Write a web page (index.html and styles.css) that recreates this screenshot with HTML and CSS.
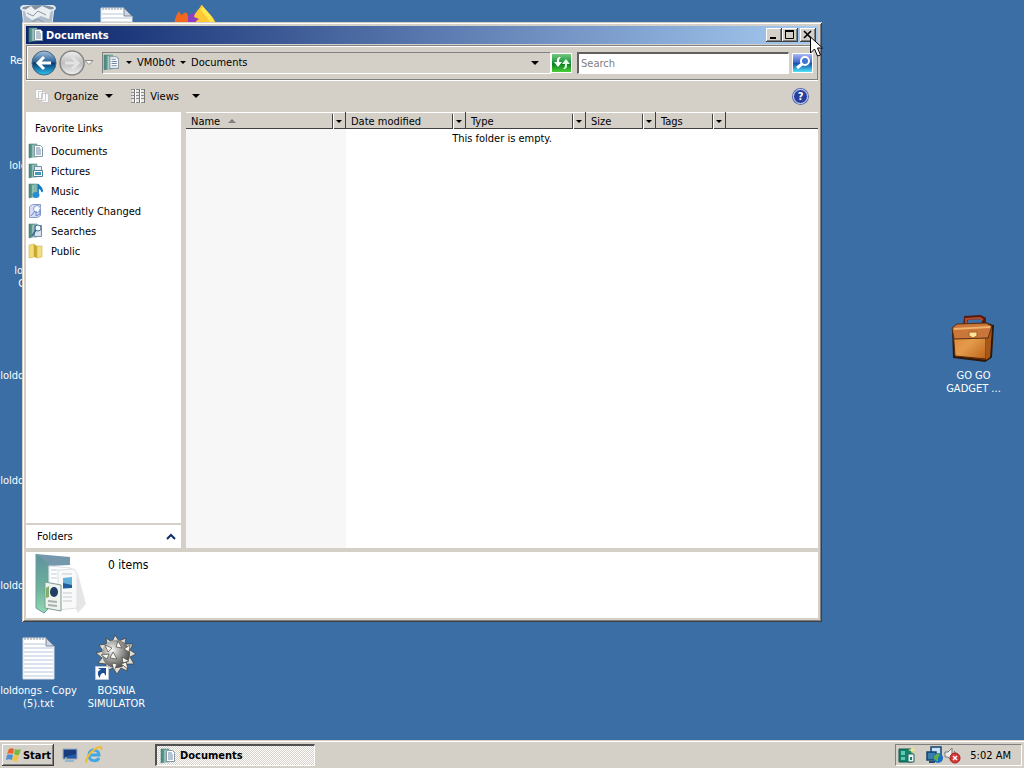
FILE: index.html
```html
<!DOCTYPE html>
<html lang="en">
<head>
    <meta charset="utf-8">
    <title>Documents</title>
    <link rel="stylesheet" href="styles.css">
</head>
<body>
    <!-- shared icons -->
    <svg class="defs" width="0" height="0">
        <defs>
            <linearGradient id="teal" x1="0" x2="1"><stop offset="0" stop-color="#3f8177"/><stop offset="1" stop-color="#9cc9bd"/></linearGradient>
            <linearGradient id="blueBall" x1="0" y1="0" x2="0" y2="1"><stop offset="0" stop-color="#a5c3de"/><stop offset=".45" stop-color="#2c6598"/><stop offset=".5" stop-color="#063a70"/><stop offset="1" stop-color="#2fc5f2"/></linearGradient>
            <linearGradient id="greyBall" x1="0" y1="0" x2="0" y2="1"><stop offset="0" stop-color="#f1f1f0"/><stop offset=".5" stop-color="#bebebe"/><stop offset="1" stop-color="#efefef"/></linearGradient>
            <linearGradient id="leather" x1="0" y1="0" x2="1" y2="1"><stop offset="0" stop-color="#dc8130"/><stop offset=".5" stop-color="#e39b4b"/><stop offset="1" stop-color="#bd6418"/></linearGradient>
            <linearGradient id="bigFolder" x1="0" y1="0" x2="0" y2="1"><stop offset="0" stop-color="#5f909d"/><stop offset=".6" stop-color="#6eb49b"/><stop offset="1" stop-color="#91d9b2"/></linearGradient>
            <radialGradient id="steel" cx=".35" cy=".35" r=".7"><stop offset="0" stop-color="#fafafa"/><stop offset=".45" stop-color="#a5a5a3"/><stop offset="1" stop-color="#4a4a48"/></radialGradient>
        </defs>
        <symbol id="folder" viewBox="0 0 16 16">
            <path d="M1 1h8v13H5L1 15z" fill="url(#teal)" stroke="#4c8a80" stroke-width=".6"/>
            <path d="M5 2v12" stroke="#b7dcd2"/>
        </symbol>
        <symbol id="documents" viewBox="0 0 16 16">
            <use href="#folder"/>
            <path d="M6.500 2.500h6l2 2v9h-8z" fill="#fff" stroke="#8598a8"/>
            <path d="M8 5h4M8 7h5M8 9h5M8 11h5" stroke="#6f88a5"/>
        </symbol>
        <symbol id="page" viewBox="0 0 48 48">
            <path d="M8 3h23l8 8v33H8z" fill="#fff" stroke="#d6dbe3"/>
            <path d="M9 9h21M9 13h29M9 17h29M9 21h29M9 25h29M9 29h29M9 33h29M9 37h29M9 41h29" stroke="#b4c6dc"/>
            <path d="M31 3v8h8z" fill="#ced7e5" stroke="#7c8796"/>
            <path d="M10 2v3M13 2v3M16 2v3M19 2v3M22 2v3M25 2v3M28 2v3" stroke="#8b96a2"/>
        </symbol>
    </svg>

    <main class="desktop">
        <div class="icons">
            <a class="icon" href="#">
                <svg width="48" height="48" viewBox="0 0 48 48"><path d="M7 2l4 43h23l5-43z" fill="#aebccb" stroke="#e7edf2"/><ellipse cx="23" cy="3" rx="17" ry="4" fill="#8292a3" stroke="#e3e8ec" stroke-width="2"/><path d="M10 5l6-4 4 4 7-4 9 4-2 9-8-3-9 4-6-4z" fill="#eceff2"/><path d="M12 8l6 3 5-5 8 4M15 18l8-4 9 5" stroke="#8998aa" fill="none"/></svg>
                <span>Recycle Bin</span>
            </a>
            <a class="icon" href="#">
                <svg width="48" height="48"><use href="#page"/></svg>
                <span>loldongs.txt</span>
            </a>
            <a class="icon" href="#">
                <svg width="48" height="48"><use href="#page"/></svg>
                <span>loldongs -<br>Copy.txt</span>
            </a>
            <a class="icon" href="#">
                <svg width="48" height="48"><use href="#page"/></svg>
                <span>loldongs - Copy<br>(2).txt</span>
            </a>
            <a class="icon" href="#">
                <svg width="48" height="48"><use href="#page"/></svg>
                <span>loldongs - Copy<br>(3).txt</span>
            </a>
            <a class="icon" href="#">
                <svg width="48" height="48"><use href="#page"/></svg>
                <span>loldongs - Copy<br>(4).txt</span>
            </a>
            <a class="icon" href="#">
                <svg width="48" height="48"><use href="#page"/></svg>
                <span>loldongs - Copy<br>(5).txt</span>
            </a>
            <a class="icon" href="#" aria-label="Text file">
                <svg width="48" height="48"><use href="#page"/></svg>
            </a>
            <a class="icon last" href="#">
                <svg width="48" height="48" viewBox="0 0 48 48">
                    <path d="M14 9l-1-6 6 4 3-7 4 6 7-3-1 6 8 0-3 6 6 4-6 3 4 7-7 0 0 7-6-3-4 6-4-6-7 3 0-7-8-1 4-5-6-5 7-2-4-6z" fill="#dddcd6" stroke="#45433c" stroke-width=".8"/>
                    <circle cx="23" cy="19" r="14" fill="url(#steel)"/>
                    <path d="M12 10l7 3-4 4zM25 6l4 7-6-1zM8 20l8-1-2 5zM20 17l4 7-7-1zM31 14l6-4-1 7zM29 22l7 4-6 2zM19 28l5 1-3 7zM28 29l5-2 2 7z" fill="#f6f5ee" stroke="#4a4942" stroke-width=".7"/>
                    <path d="M2.500 31.500h13v13h-13z" fill="#fff" stroke="#b6c4d4"/>
                    <path d="M7 43c-3-3-3-8 1-8l-3-2h8v8l-2-3c-3 0-4 2-4 5z" fill="#1c4e94"/>
                </svg>
                <span>BOSNIA<br>SIMULATOR</span>
            </a>
            <a class="icon" href="#" aria-label="Firefox">
                <svg width="48" height="48" viewBox="0 0 48 48"><path d="M3 24c0-7 1-12 5-18l2 4 5-3 3 5 9 4 4 18-5 11C10 42 3 34 3 24z" fill="#f4671f"/><path d="M17 11c3-2 5-5 9-1l6 4-3 10-12-4z" fill="#8d3fc0"/><path d="M23 12c1-5 5-7 8-13 2 7 15 13 15 25S38 44 28 44l-3-28 3-2z" fill="#ffc936"/><path d="M31 3c3 5 10 8 11 19" stroke="#ffe94f" stroke-width="4" fill="none"/></svg>
            </a>
        </div>

        <a class="icon briefcase" href="#">
            <svg width="48" height="48" viewBox="0 0 48 48">
                <path d="M15 11l1-8 14-1 4 2v7" fill="none" stroke="#551b13" stroke-width="4"/>
                <path d="M16 9V4l14-1 3 2" fill="none" stroke="#b34a2d" stroke-width="2"/>
                <path d="M3 14l32-6 8 3-2 31-6 4-31-4z" fill="#733410" stroke="#2f1808" stroke-width="2"/>
                <path d="M3 14l33-1v31L5 41z" fill="url(#leather)" stroke="#59290c"/>
                <path d="M36 13l6-2-2 31-4 3z" fill="#a75718"/>
                <path d="M2 13l5-4 29-1 6 3-4 12-34 1z" fill="#ca763b" stroke="#572b13"/>
                <path d="M4 14l36-2" stroke="#f0b16b" stroke-width="2"/>
                <path d="M19 17h8v4l-4 2-4-2z" fill="#ffe49c" stroke="#a45c23"/>
            </svg>
            <span>GO GO<br>GADGET ...</span>
        </a>

        <section class="window">
            <header class="titlebar">
                <svg width="16" height="16"><use href="#documents"/></svg>
                <h1>Documents</h1>
                <button aria-label="Minimize"><svg width="12" height="10" viewBox="0 0 12 10"><path d="M2 8h6" stroke="#000" stroke-width="2"/></svg></button>
                <button aria-label="Maximize"><svg width="12" height="10" viewBox="0 0 12 10"><path d="M1.500 1v7.500h8V1M1 1h9" fill="none" stroke="#000"/><path d="M1 1h9" stroke="#000" stroke-width="2"/></svg></button>
                <button class="close" aria-label="Close"><svg width="12" height="10" viewBox="0 0 12 10"><path d="M2 1l7 7M9 1L2 8" stroke="#000" stroke-width="1.600"/></svg></button>
            </header>

            <div class="navbar">
                <button class="round" aria-label="Back"><svg width="26" height="26" viewBox="0 0 26 26"><circle cx="13" cy="13" r="12" fill="url(#blueBall)" stroke="#45647f"/><path d="M20 13H8M13 7l-6 6 6 6" fill="none" stroke="#fff" stroke-width="3"/></svg></button>
                <button class="round" aria-label="Forward"><svg width="26" height="26" viewBox="0 0 26 26"><circle cx="13" cy="13" r="12" fill="url(#greyBall)" stroke="#858585" stroke-width="1.500"/><path d="M6 13h12M13 7l6 6-6 6" fill="none" stroke="#e2e2e2" stroke-width="3"/></svg></button>
                <button class="recent" aria-label="Recent pages"><svg width="10" height="6" viewBox="0 0 10 6"><path d="M1 .5h8l-4 4z" fill="#fff" stroke="#8a8a8a"/></svg></button>
                <div class="address">
                    <svg width="17" height="17"><use href="#documents"/></svg>
                    <i class="caret"></i>
                    <a href="#">VM0b0t</a>
                    <i class="caret"></i>
                    <a href="#">Documents</a>
                    <button class="history" aria-label="Previous locations"><i class="caret wide"></i></button>
                </div>
                <button class="square green" aria-label="Refresh"><svg width="18" height="18" viewBox="0 0 18 18"><path d="M8 3C4 3 4 5 4 8H1l4 5 4-5H6c0-2 0-3 2-5z" fill="#fff"/><path d="M10 15c4 0 4-2 4-5h3l-4-5-4 5h3c0 2 0 3-2 5z" fill="#e5ffe5"/></svg></button>
                <input class="search" type="text" placeholder="Search" aria-label="Search">
                <button class="square blue" aria-label="Start search"><svg width="18" height="18" viewBox="0 0 18 18"><circle cx="11" cy="7" r="4" fill="#3e75d2" stroke="#fff" stroke-width="2"/><path d="M8 10l-5 4" stroke="#fff" stroke-width="3"/></svg></button>
            </div>

            <div class="toolbar">
                <button><svg width="16" height="16" viewBox="0 0 16 16"><path d="M1.500 1.500h7v9h-7zM4.500 3.500h7v9h-7zM7.500 5.500h7v9h-7z" fill="#fbfbfb" stroke="#c1c1c1" stroke-width=".8"/></svg>Organize<i class="caret wide"></i></button>
                <button><svg width="16" height="16" viewBox="0 0 16 16"><path d="M2 1h13v14H2z" fill="#e8e8e6"/><path d="M1 1.500h14M1 4.500h14M1 7.500h14M1 10.500h14M1 14.500h14" stroke="#8d8d8b"/><path d="M4.500 1v14M9.500 1v14M14.500 1v14" stroke="#777"/><path d="M5.500 1v14M10.500 1v14" stroke="#fff"/></svg>Views<i class="caret wide far"></i></button>
                <button class="help" aria-label="Help">?</button>
            </div>

            <div class="content">
                <nav class="sidebar">
                    <h2>Favorite Links</h2>
                    <ul>
                        <li><a href="#"><svg width="16" height="16"><use href="#documents"/></svg>Documents</a></li>
                        <li><a href="#"><svg width="16" height="16" viewBox="0 0 16 16"><use href="#folder"/><path d="M6.500 3.500h7v4h-7z" fill="#e8f2f7" stroke="#6c91a9"/><path d="M5.500 7.500h9v6h-9z" fill="#fff" stroke="#557c99"/><path d="M7 9h6v3H7z" fill="#419bbd"/></svg>Pictures</a></li>
                        <li><a href="#"><svg width="16" height="16" viewBox="0 0 16 16"><use href="#folder"/><path d="M10 12V1c1 3 5 3 4 8 0-3-2-3-3-4" fill="#1677c0" stroke="#1677c0" stroke-width="1.500"/><ellipse cx="8" cy="12" rx="3.500" ry="3" fill="#278dd2"/></svg>Music</a></li>
                        <li><a href="#"><svg width="16" height="16" viewBox="0 0 16 16"><path d="M1.500 3.500l3-2h8v11l-3 2h-8z" fill="#d5dcf6" stroke="#8a9bcd"/><circle cx="9" cy="6" r="3.500" fill="#f5f8ff" stroke="#8aa0cf"/><path d="M7 8l-4 5M8 8v5l4-2V6" fill="none" stroke="#6d87c2"/></svg>Recently Changed</a></li>
                        <li><a href="#"><svg width="16" height="16" viewBox="0 0 16 16"><use href="#folder"/><path d="M6.500 2.500h7v11h-7z" fill="#d7e4ef" stroke="#7190a8"/><circle cx="10" cy="5" r="3" fill="#edf7ff" stroke="#4c7395"/><path d="M8 7l-4 6" stroke="#3d6688" stroke-width="1.500"/></svg>Searches</a></li>
                        <li><a href="#"><svg width="16" height="16" viewBox="0 0 16 16"><path d="M1 2l5-1v13l-5 1z" fill="#f2dc79" stroke="#d1b554" stroke-width=".6"/><path d="M6 1l3 2v12l-3-1z" fill="#c9a82f"/><path d="M9 3h5v11l-5 1z" fill="#f1df82" stroke="#d2b44e" stroke-width=".6"/></svg>Public</a></li>
                    </ul>
                    <button class="folders">Folders<svg width="10" height="7" viewBox="0 0 10 7"><path d="M1 6l4-4 4 4" fill="none" stroke="#0f2c6c" stroke-width="2"/></svg></button>
                </nav>

                <div class="files">
                    <table>
                        <colgroup>
                            <col class="name"><col class="medium"><col class="medium"><col class="small"><col class="small"><col>
                        </colgroup>
                        <thead>
                            <tr>
                                <th><div>Name<i class="sort"></i><button aria-label="Filter name"><i class="caret"></i></button></div></th>
                                <th><div>Date modified<button aria-label="Filter date"><i class="caret"></i></button></div></th>
                                <th><div>Type<button aria-label="Filter type"><i class="caret"></i></button></div></th>
                                <th><div>Size<button aria-label="Filter size"><i class="caret"></i></button></div></th>
                                <th><div>Tags<button aria-label="Filter tags"><i class="caret"></i></button></div></th>
                                <th></th>
                            </tr>
                        </thead>
                        <tbody>
                            <tr><td colspan="6">This folder is empty.</td></tr>
                        </tbody>
                    </table>
                </div>
            </div>

            <footer class="details">
                <svg width="56" height="64" viewBox="0 0 56 64">
                    <path d="M2 2l34 3v8l-22 1z" fill="#7598ac"/>
                    <path d="M40 54l4-32 8 30-8 9z" fill="#dcdcdc" opacity=".7"/>
                    <path d="M15 14l22 2v39l-22-3z" fill="#fff" stroke="#dce1e4"/>
                    <path d="M24 18l16-1 3 4v35l-19 2z" fill="#f9f9fa" stroke="#dce0e3"/>
                    <path d="M29 26l9-1v11l-9 1z" fill="#66b0dc"/><path d="M29 31l9 2v3h-9z" fill="#245d9c"/>
                    <path d="M17 18h6M17 22h6M17 26h6M28 22h10M29 41h9M29 45h9M29 49h9" stroke="#c2cbd1"/>
                    <path d="M2 2l12 9v46l-4 4L2 56z" fill="url(#bigFolder)" stroke="#6b9da0"/>
                    <path d="M11 30l16 3v26l-16-3z" fill="#eff3f0" stroke="#7b9c92"/>
                    <ellipse cx="20" cy="40" rx="4" ry="5" fill="#223d62"/><path d="M12 36l3-2v11l-3 1z" fill="#84af68"/><path d="M14 49l9 1M14 53l9 1" stroke="#a9b1ac" stroke-width="2"/>
                </svg>
                <p>0 items</p>
            </footer>

            <svg class="cursor" width="13" height="22" viewBox="0 0 13 22"><path d="M.5 1v16l4-4 3 7 3-1-3-7h5z" fill="#fff" stroke="#000"/></svg>
        </section>
    </main>

    <footer class="taskbar">
        <button class="start"><svg width="18" height="16" viewBox="0 0 18 16"><path d="M4 2c2-1 3-1 5 0L8 7C6 6 4 6 2 7z" fill="#ea6328"/><path d="M10 2c2 1 4 1 6 0l-2 6c-2 1-3 0-5-1z" fill="#79b943"/><path d="M2 8c2-1 4-1 6 0l-1 5c-2-1-4-1-6 0z" fill="#4f8fd1"/><path d="M9 8c1 1 3 1 5 0l-2 6c-1 1-3 0-5-1z" fill="#f2c63c"/></svg>Start</button>
        <div class="quick">
            <button aria-label="Show desktop"><svg width="16" height="16" viewBox="0 0 16 16"><path d="M1 2h14v10H1z" fill="#2459a9" stroke="#98a7b9"/><path d="M2 3h12v4L2 10z" fill="#173b7c"/><path d="M3 13h9v2H3z" fill="#8fb7d1"/><path d="M3 11h2" stroke="#aef271"/></svg></button>
            <button aria-label="Internet Explorer"><svg width="18" height="18" viewBox="0 0 18 18"><path d="M14 12c-2 4-10 4-10-3s10-6 10 0H5" fill="none" stroke="#43a7e5" stroke-width="3"/><path d="M2 15C-1 19 3 6 12 2c4-2 5-1 4 2" fill="none" stroke="#efbc35" stroke-width="2"/></svg></button>
        </div>
        <button class="task"><svg width="16" height="16"><use href="#documents"/></svg>Documents</button>
        <div class="tray">
            <svg width="18" height="18" viewBox="0 0 18 18"><path d="M1 3h13v13H1z" fill="#16836f" stroke="#0c5549"/><path d="M3 5h4v4H3zM3 11h4v3H3z" fill="#61c9ab"/><path d="M10 8h6v8h-6z" fill="#e8f4f1" stroke="#23695c"/><path d="M12 11h2v3h-2z" fill="#188067"/><path d="M14 0l1 3 3 1-3 1-1 3-1-3-3-1 3-1z" fill="#f0e589"/></svg>
            <svg class="net" width="18" height="18" viewBox="0 0 18 18"><path d="M5 1h10v8H5z" fill="#c4e2f5" stroke="#16426f" stroke-width="1.500"/><path d="M1 6h9v8H1z" fill="#387eaf" stroke="#16426f" stroke-width="1.500"/><path d="M3 16h6" stroke="#274d69" stroke-width="2"/><circle cx="12" cy="12" r="5" fill="#1770c2"/><path d="M8 10l4-3 2 2-2 3v4l-4-3z" fill="#62ad4a"/></svg>
            <svg width="18" height="18" viewBox="0 0 18 18"><path d="M1 6h3l4-4v13l-4-4H1z" fill="#eee" stroke="#777"/><path d="M10 5c2 2 2 5 0 7" stroke="#666" fill="none"/><circle cx="11" cy="12" r="5" fill="#d73838" stroke="#a32020"/><path d="M9 10l4 4M13 10l-4 4" stroke="#fff" stroke-width="1.500"/></svg>
            <time>5:02 AM</time>
        </div>
    </footer>
</body>
</html>
```
FILE: styles.css
```css
* {
    box-sizing: border-box;
}
body {
    margin: 0;
    height: 100vh;
    display: flex;
    flex-direction: column;
    overflow: hidden;
    background: #3a6ea5;
    color: #000;
    font-family: "DejaVu Sans Condensed", "Liberation Sans", sans-serif;
    font-size: 11px;
    line-height: 13px;
}
h1, h2, p, ul {
    margin: 0;
    padding: 0;
}
a {
    color: inherit;
    text-decoration: none;
}
button {
    display: flex;
    align-items: center;
    justify-content: center;
    margin: 0;
    padding: 0;
    border: none;
    background: none;
    color: inherit;
    font: inherit;
}
svg {
    display: block;
    flex: none;
}
.defs {
    position: absolute;
}
.caret {
    flex: none;
    border: 3px solid transparent;
    border-top-color: #000;
    border-bottom: none;
}
.caret.wide {
    border-width: 4px;
    border-bottom: none;
}

/* desktop */
.desktop {
    flex: 1;
    position: relative;
    min-height: 0;
}
.icons {
    display: grid;
    grid-template-columns: repeat(3, 78px);
    grid-template-rows: repeat(7, 105px);
    grid-auto-flow: column;
}
.icon {
    display: flex;
    flex-direction: column;
    align-items: center;
    gap: 1px;
    padding-top: 5px;
    width: 77px;
    color: #fff;
    text-align: center;
    white-space: nowrap;
}
.icon.last {
    grid-row: 7;
}
.icons .icon:last-child {
    grid-column: 3;
    grid-row: 1;
}
.briefcase {
    position: absolute;
    top: 310px;
    right: 12px;
    gap: 6px;
}

/* explorer window */
.window {
    position: absolute;
    top: 22px;
    left: 22px;
    right: 202px;
    bottom: 118px;
    display: flex;
    flex-direction: column;
    padding: 4px;
    background: #d4d0c8;
    box-shadow: inset 1px 1px #d4d0c8, inset -1px -1px #404040, inset 2px 2px #fff, inset -2px -2px #808080;
}
.titlebar {
    display: flex;
    align-items: center;
    height: 18px;
    padding: 0 2px;
    background: linear-gradient(to right, #0a246a, #a6caf0);
    color: #fff;
}
.titlebar h1 {
    flex: 1;
    margin-left: 2px;
    font-size: 11px;
}
.titlebar button {
    width: 16px;
    height: 14px;
    background: #d4d0c8;
    box-shadow: inset -1px -1px #404040, inset 1px 1px #fff, inset -2px -2px #808080;
}
.titlebar .close {
    margin-left: 2px;
}
.cursor {
    position: absolute;
    top: 14px;
    right: -1px;
}
.navbar {
    display: flex;
    align-items: center;
    height: 35px;
    margin-top: 1px;
    padding: 0 4px;
    border: 1px solid #808080;
    box-shadow: inset 1px 1px #fff, 0 1px #fff;
}
.round {
    margin-right: 2px;
}
.recent {
    margin-left: -3px;
}
.address {
    flex: 1;
    display: flex;
    align-items: center;
    height: 22px;
    margin-left: 8px;
    border: 1px solid #fff;
    border-top-color: #808080;
    border-left-color: #808080;
}
.address svg {
    margin-right: 6px;
}
.address a {
    margin: 0 5px;
}
.history {
    margin-left: auto;
    width: 30px;
    height: 20px;
}
.square {
    width: 21px;
    height: 20px;
    border: 1px solid #fff;
}
.green {
    background: linear-gradient(#75c97d, #17903d 50%, #0d7d26 55%, #48cf36);
}
.blue {
    background: linear-gradient(#a8b9f4, #3b62c9 48%, #184cae 52%, #4ee5f6);
}
.search {
    width: 212px;
    height: 22px;
    margin: 0 3px 0 5px;
    padding: 1px 2px;
    border: 1px solid #fff;
    border-top: 2px solid #606060;
    border-left: 2px solid #606060;
    background: #fff;
    font: inherit;
}
.search::placeholder {
    color: #808080;
    opacity: 1;
}
.toolbar {
    display: flex;
    align-items: center;
    gap: 17px;
    height: 32px;
    padding: 0 10px 0 8px;
}
.toolbar button {
    gap: 4px;
}
.toolbar .caret {
    margin-left: 3px;
}
.toolbar .far {
    margin-left: 9px;
}
.toolbar .help {
    width: 15px;
    height: 15px;
    margin-left: auto;
    border: 1px solid #d9e2ff;
    border-radius: 50%;
    background: #263f9d;
    box-shadow: 0 0 0 1px #5c6fb2;
    color: #fff;
    font-weight: bold;
}
.content {
    flex: 1;
    display: flex;
    gap: 5px;
    min-height: 0;
}

/* favorite links */
.sidebar {
    display: flex;
    flex-direction: column;
    width: 155px;
    background: #fff;
}
.sidebar h2 {
    padding: 10px 9px 6px;
    font-size: 11px;
    font-weight: normal;
}
.sidebar ul {
    flex: 1;
    list-style: none;
}
.sidebar a {
    display: flex;
    align-items: center;
    gap: 7px;
    height: 20px;
    padding-left: 2px;
}
.folders {
    justify-content: space-between;
    height: 25px;
    padding: 0 5px 0 11px;
    border-top: 2px solid #d4d0c8;
}

/* file list */
.files {
    flex: 1;
    background: linear-gradient(#f7f7f7, #f7f7f7) 0 0 / 160px 100% no-repeat #fff;
}
table {
    width: 100%;
    table-layout: fixed;
    border-collapse: collapse;
}
.name {
    width: 160px;
}
.medium {
    width: 120px;
}
.small {
    width: 70px;
}
th {
    height: 17px;
    padding: 0;
    background: #d4d0c8;
    box-shadow: inset 0 1px #fff, inset 0 -1px #404040;
    font-weight: normal;
}
th div {
    display: flex;
    align-items: center;
    height: 17px;
    padding: 1px 0 0 5px;
    border-right: 1px solid #404040;
}
th button {
    width: 13px;
    height: 15px;
    margin-left: auto;
    border-left: 1px solid #404040;
    box-shadow: inset 1px 0 #fff;
}
.sort {
    margin-left: 8px;
    border: 4px solid transparent;
    border-top: none;
    border-bottom-color: #808080;
}
td {
    padding: 3px 0;
    text-align: center;
}

/* details pane */
.details {
    display: flex;
    gap: 18px;
    height: 66px;
    margin-top: 4px;
    padding: 0 8px;
    background: #fff;
}
.details p {
    padding-top: 7px;
    font-size: 12px;
}

/* taskbar */
.taskbar {
    display: flex;
    align-items: center;
    height: 28px;
    padding: 2px 2px 0;
    background: #d4d0c8;
    box-shadow: inset 0 1px #d4d0c8, inset 0 2px #fff;
}
.start {
    width: 52px;
    height: 22px;
    box-shadow: inset -1px -1px #404040, inset 1px 1px #fff, inset -2px -2px #808080;
    font-weight: bold;
}
.quick {
    display: flex;
    align-items: center;
    gap: 7px;
    width: 101px;
    padding-left: 8px;
}
.task {
    justify-content: flex-start;
    gap: 4px;
    width: 160px;
    height: 22px;
    padding-left: 3px;
    border: 1px solid #fff;
    border-top: 2px solid #505050;
    border-left: 2px solid #505050;
    background: repeating-conic-gradient(#fff 0 25%, #d4d0c8 0 50%) 0 0 / 2px 2px;
    font-weight: bold;
}
.tray {
    display: flex;
    align-items: center;
    height: 22px;
    margin-left: auto;
    padding: 0 10px 0 2px;
    border: 1px solid #fff;
    border-top-color: #808080;
    border-left-color: #808080;
}
.tray .net {
    margin-left: 10px;
}
.tray time {
    margin-left: 8px;
}
```
